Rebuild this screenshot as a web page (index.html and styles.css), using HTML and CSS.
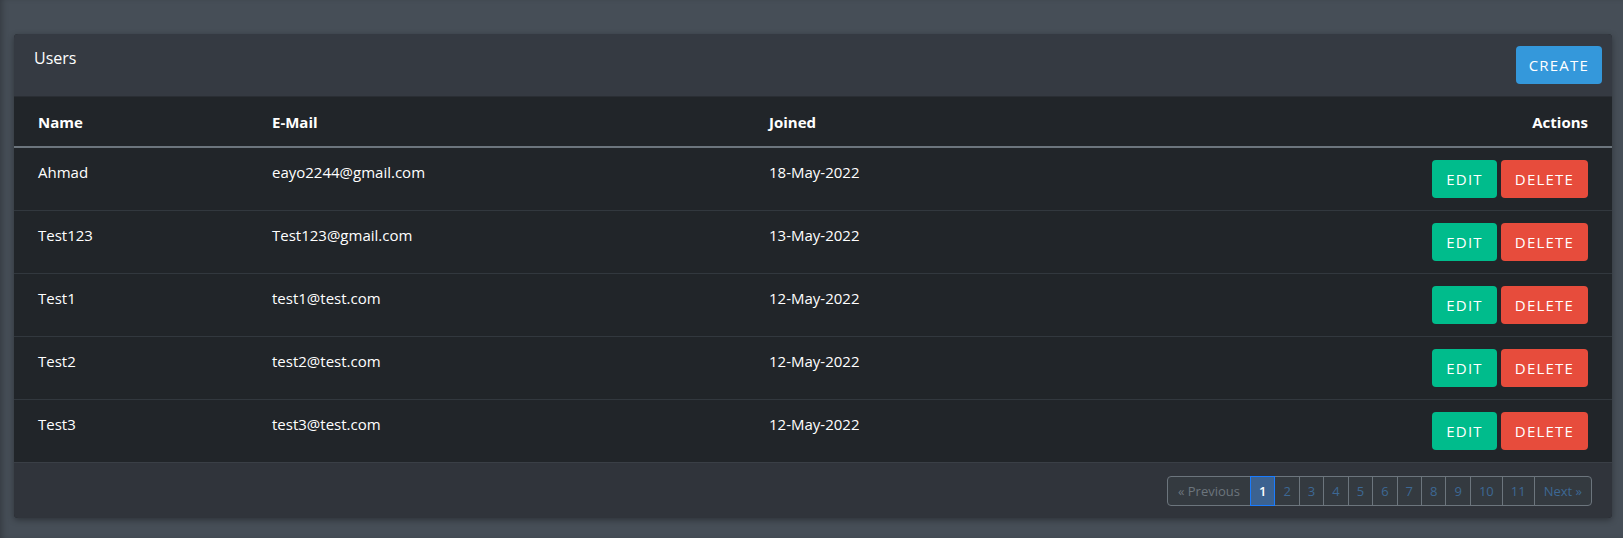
FILE: index.html
```html
<!DOCTYPE html>
<html lang="en">
<head>
<meta charset="utf-8">
<title>Users</title>
<link rel="stylesheet" href="styles.css">
</head>
<body>
<div class="page">
  <div class="card">
    <div class="card-header">
      <div class="card-title">Users</div>
      <button class="btn btn-info">Create</button>
    </div>
    <table class="table">
      <colgroup>
        <col class="c-name">
        <col class="c-mail">
        <col class="c-joined">
        <col class="c-actions">
      </colgroup>
      <thead>
        <tr>
          <th>Name</th>
          <th>E-Mail</th>
          <th>Joined</th>
          <th class="right">Actions</th>
        </tr>
      </thead>
      <tbody>
        <tr>
          <td>Ahmad</td>
          <td>eayo2244@gmail.com</td>
          <td>18-May-2022</td>
          <td class="right"><div class="actions"><button class="btn btn-success">Edit</button><button class="btn btn-danger">Delete</button></div></td>
        </tr>
        <tr>
          <td>Test123</td>
          <td>Test123@gmail.com</td>
          <td>13-May-2022</td>
          <td class="right"><div class="actions"><button class="btn btn-success">Edit</button><button class="btn btn-danger">Delete</button></div></td>
        </tr>
        <tr>
          <td>Test1</td>
          <td>test1@test.com</td>
          <td>12-May-2022</td>
          <td class="right"><div class="actions"><button class="btn btn-success">Edit</button><button class="btn btn-danger">Delete</button></div></td>
        </tr>
        <tr>
          <td>Test2</td>
          <td>test2@test.com</td>
          <td>12-May-2022</td>
          <td class="right"><div class="actions"><button class="btn btn-success">Edit</button><button class="btn btn-danger">Delete</button></div></td>
        </tr>
        <tr>
          <td>Test3</td>
          <td>test3@test.com</td>
          <td>12-May-2022</td>
          <td class="right"><div class="actions"><button class="btn btn-success">Edit</button><button class="btn btn-danger">Delete</button></div></td>
        </tr>
      </tbody>
    </table>
    <div class="card-footer">
      <ul class="pagination">
        <li class="page-item disabled"><span class="page-link">&laquo; Previous</span></li>
        <li class="page-item active"><span class="page-link">1</span></li>
        <li class="page-item"><a class="page-link">2</a></li>
        <li class="page-item"><a class="page-link">3</a></li>
        <li class="page-item"><a class="page-link">4</a></li>
        <li class="page-item"><a class="page-link">5</a></li>
        <li class="page-item"><a class="page-link">6</a></li>
        <li class="page-item"><a class="page-link">7</a></li>
        <li class="page-item"><a class="page-link">8</a></li>
        <li class="page-item"><a class="page-link">9</a></li>
        <li class="page-item"><a class="page-link">10</a></li>
        <li class="page-item"><a class="page-link">11</a></li>
        <li class="page-item"><a class="page-link">Next &raquo;</a></li>
      </ul>
    </div>
  </div>
</div>
</body>
</html>
```

FILE: styles.css
```css
* { box-sizing: border-box; }

html, body {
  margin: 0;
  padding: 0;
  height: 100%;
}

body {
  background: #464e57;
  color: #fff;
  font-family: "Open Sans", "Noto Sans", sans-serif;
  font-size: 15px;
  line-height: 24px;
  box-shadow: inset 5px 0 6px -3px rgba(0, 0, 0, 0.25);
}

.page {
  padding: 34px 11px 0 14px;
}

.card {
  background: #212529;
  border-radius: 4px;
  box-shadow: 0 2px 6px rgba(0, 0, 0, 0.35);
  overflow: hidden;
}

.card-header {
  display: flex;
  justify-content: space-between;
  align-items: flex-start;
  background: #353a42;
  padding: 12px 10px 12px 20px;
  border-bottom: 1px solid #2a2e34;
}

.card-title {
  font-size: 16px;
  line-height: 25px;
  font-weight: 400;
}

.btn {
  display: inline-flex;
  align-items: center;
  justify-content: center;
  height: 38px;
  padding: 0 14px;
  border: 0;
  border-radius: 4px;
  color: #fff;
  font-family: inherit;
  font-size: 15px;
  letter-spacing: 1.2px;
  text-transform: uppercase;
  cursor: pointer;
}

.btn-info { background: #3498db; padding: 0 13px; }
.btn-success { background: #00bc8c; }
.btn-danger { background: #e74c3c; }

.table {
  width: 100%;
  border-collapse: collapse;
  table-layout: fixed;
  background: #212529;
}

.c-name { width: 234px; }
.c-mail { width: 497px; }
.c-joined { width: 400px; }

.table th,
.table td {
  padding: 12px 24px;
  text-align: left;
  vertical-align: top;
}

.table th {
  font-weight: 700;
  padding-top: 13px;
  padding-bottom: 12px;
  border-bottom: 2px solid #6c757d;
}

.table tbody tr {
  border-bottom: 1px solid #32383e;
}

.table tbody tr:last-child {
  border-bottom: 1px solid #3a3f46;
}

.table .right { text-align: right; }

.actions {
  display: flex;
  justify-content: flex-end;
  gap: 4px;
}

.card-footer {
  display: flex;
  justify-content: flex-end;
  background: #30343b;
  padding: 13px 20px 12px 20px;
}

.pagination {
  display: flex;
  list-style: none;
  margin: 0;
  padding: 0;
}

.page-link {
  display: block;
  height: 30px;
  padding: 0 8px;
  line-height: 28px;
  font-size: 13px;
  color: #3d6894;
  background: #343a40;
  border: 1px solid #6c757d;
  margin-left: -1px;
  text-decoration: none;
}

.page-item:first-child .page-link {
  margin-left: 0;
  padding: 0 10px;
  border-radius: 4px 0 0 4px;
}

.page-item:last-child .page-link {
  padding: 0 9px;
  border-radius: 0 4px 4px 0;
}

.page-item.disabled .page-link {
  color: #6c757d;
}

.page-item.active .page-link {
  position: relative;
  z-index: 1;
  color: #fff;
  background: #3c6290;
  border-color: #1a7cff;
  font-weight: 600;
}
```
